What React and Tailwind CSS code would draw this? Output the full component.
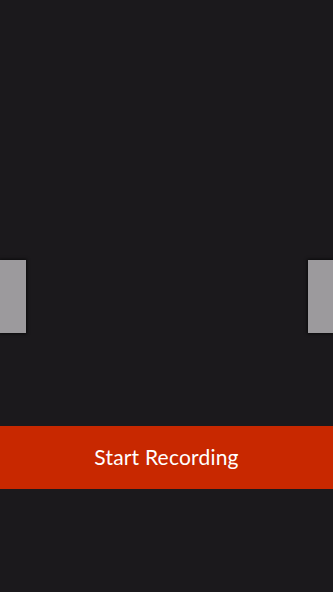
import React from "react";

export default function App() {
  return (
    <div
      className="h-[592px] w-full bg-[#1b191c] flex flex-col overflow-hidden"
      style={{ fontFamily: "Lato, 'Open Sans', sans-serif" }}
    >
      {/* Side handles */}
      <div className="flex justify-between mt-[260px] h-[73px]">
        <div className="w-[26px] h-full bg-[#9c9a9d] shadow-[0_0_3px_1px_rgba(0,0,0,0.6)]" />
        <div className="w-[25px] h-full bg-[#9c9a9d] shadow-[0_0_3px_1px_rgba(0,0,0,0.6)]" />
      </div>

      {/* Record button */}
      <button className="mt-[93px] h-[63px] w-full bg-[#c82800] text-white text-[21px] tracking-[0.2px] flex items-center justify-center pb-[1px]">
        Start Recording
      </button>
    </div>
  );
}
